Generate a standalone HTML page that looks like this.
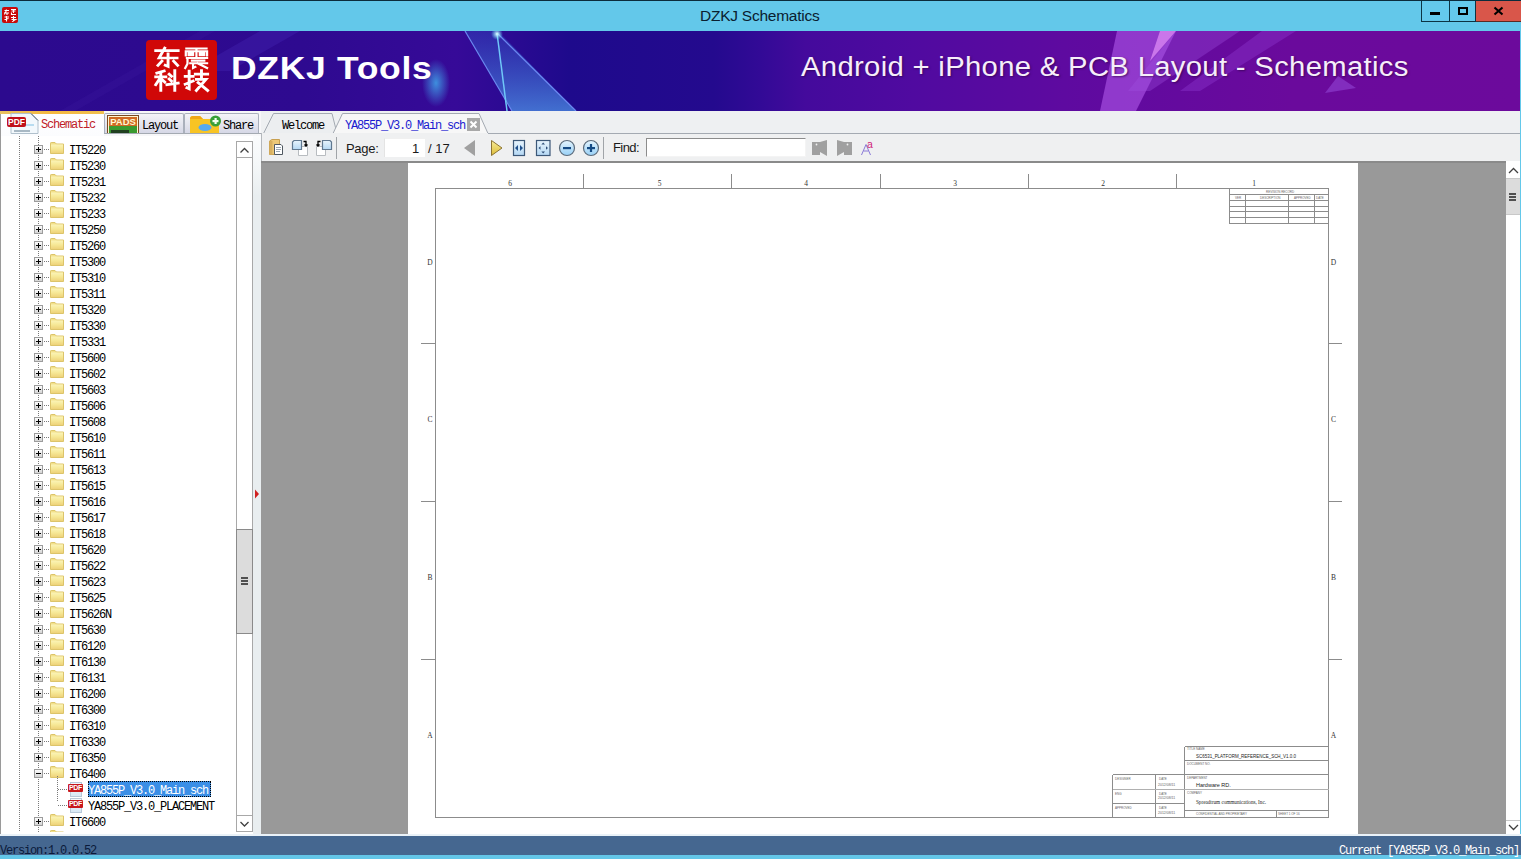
<!DOCTYPE html>
<html><head><meta charset="utf-8">
<style>
*{margin:0;padding:0;box-sizing:border-box}
html,body{width:1521px;height:859px;overflow:hidden;background:#63c8ea;font-family:"Liberation Sans",sans-serif}
.a{position:absolute}
.mono{font-family:"Liberation Mono",monospace;font-size:12px;letter-spacing:-1.2px;line-height:16px;white-space:pre;color:#000}
.dotv{width:1px;background:repeating-linear-gradient(180deg,#7a7a7a 0 1px,transparent 1px 2px)}
.doth{height:1px;background:repeating-linear-gradient(90deg,#7a7a7a 0 1px,transparent 1px 2px)}
.pbox{width:9px;height:9px;border:1px solid #9c9c9c;background:linear-gradient(180deg,#fdfdfd,#d4d4d4)}
.pbox i{position:absolute;background:#000}
.pbox i.h{left:1px;top:3px;width:5px;height:1px}
.pbox i.v{left:3px;top:1px;width:1px;height:5px}
.pdfi{width:16px;height:15px}
.pdfi .pg{position:absolute;left:2px;top:0;width:12px;height:15px;background:linear-gradient(180deg,#f4f8fc,#d8e8f4);border:1px solid #b8c8d8}
.pdfi .bd{position:absolute;left:0;top:2px;width:15px;height:8px;background:#c8181c;border-radius:1px;color:#fff;font:bold 7px/8px "Liberation Sans",sans-serif;letter-spacing:-0.3px;text-align:center}
.sel{background:#3a8ee6;border:1px dotted #000}
#title{left:0;top:0;width:1521px;height:31px;background:#63c8ea;border-top:1px solid #0b2c3c}
#banner{left:0;top:31px;width:1520px;height:80px;overflow:hidden;
 background:linear-gradient(90deg,#2c0a8c 0%,#2a0a8e 30%,#2a0a90 50%,#3a0a96 55%,#5a0aa0 66%,#6a0a9c 80%,#6c0a9a 100%)}
#tabrow{left:0;top:111px;width:1520px;height:25px;background:#f3f3f5}
#left{left:0;top:136px;width:253px;height:700px;background:#fff;border-left:1px solid #9a9a9a}
#splitter{left:253px;top:136px;width:8px;height:700px;background:linear-gradient(180deg,#fbfcfd 0,#f4f7f8 30px,#e9eef0 60px)}
#toolbar{left:261px;top:133px;width:1259px;height:29px;background:#eeeff0;border-top:1px solid #a8acb0;border-left:1px solid #d0d4d8}
#doc{left:261px;top:161px;width:1245px;height:673px;background:#999;border-top:2px solid #8a8a8a}
#vsr{left:1505px;top:162px;width:15px;height:672px;background:#fff}
#status{left:0;top:836px;width:1521px;height:19px;background:#456790}
#bottom{left:0;top:855px;width:1521px;height:4px;background:#63c6e8}
</style></head><body>
<svg width="0" height="0" style="position:absolute"><defs>
<linearGradient id="fg" x1="0" y1="0" x2="0" y2="1"><stop offset="0" stop-color="#fbf4b8"/><stop offset="0.5" stop-color="#f6e896"/><stop offset="1" stop-color="#eed27a"/></linearGradient>
</defs></svg>
<div id="title" class="a">
  <div class="a" style="left:700px;top:6px;font-size:15.5px;letter-spacing:-0.25px;color:#0a2030;line-height:17px">DZKJ Schematics</div>
</div>
<div id="banner" class="a">
 <svg class="a" style="left:0;top:0" width="1520" height="80" viewBox="0 0 1520 80">
  <defs>
   <linearGradient id="bg1" x1="0" y1="0" x2="1" y2="0">
    <stop offset="0" stop-color="#2c0a8e"/>
    <stop offset="0.2" stop-color="#2e0a90"/>
    <stop offset="0.3" stop-color="#360a98"/>
    <stop offset="0.375" stop-color="#1e0a8c"/>
    <stop offset="0.47" stop-color="#240a8e"/>
    <stop offset="0.5" stop-color="#320a96"/>
    <stop offset="0.53" stop-color="#440a9c"/>
    <stop offset="0.6" stop-color="#500aa0"/>
    <stop offset="0.7" stop-color="#5e0aa0"/>
    <stop offset="0.85" stop-color="#6a0a9c"/>
    <stop offset="1" stop-color="#6c0a9c"/>
   </linearGradient>
   <radialGradient id="glow" cx="0.5" cy="0.5" r="0.5"><stop offset="0" stop-color="#40b0f0" stop-opacity="0.8"/><stop offset="1" stop-color="#40b0f0" stop-opacity="0"/></radialGradient>
   <radialGradient id="glow2" cx="0.5" cy="0.5" r="0.5"><stop offset="0" stop-color="#e0ffff" stop-opacity="1"/><stop offset="1" stop-color="#60e0ff" stop-opacity="0"/></radialGradient>
   <linearGradient id="bm" x1="0" y1="0" x2="0" y2="1"><stop offset="0" stop-color="#3048c0" stop-opacity="0.45"/><stop offset="1" stop-color="#4a88e0" stop-opacity="0.8"/></linearGradient>
  </defs>
  <rect width="1520" height="80" fill="url(#bg1)"/>
  <!-- faint streaks left -->
  <path d="M60 80 L200 0 H215 L75 80 Z" fill="#4a2ab0" opacity="0.15"/>
  <path d="M190 40 L260 0 H300 L230 40 Z" fill="#5a3ad0" opacity="0.2"/>
  <!-- glow blob -->
  <ellipse cx="436" cy="52" rx="14" ry="24" fill="url(#glow)"/>
  <!-- beam -->
  <path d="M465 0 H498 L576 80 H512 Z" fill="url(#bm)"/>
  <path d="M465 0 L512 80" stroke="#6a8af0" stroke-width="1.2"/>
  <path d="M497 2 L507 80" stroke="#70c8f8" stroke-width="1.5"/>
  <path d="M497 2 L576 80" stroke="#6a88f0" stroke-width="1.3"/>
  <circle cx="497" cy="3" r="6" fill="url(#glow2)"/>
  <!-- right pink streaks -->
  <path d="M1117 0 H1176 L1136 80 H1100 Z" fill="#b860f0" opacity="0.55"/>
  <path d="M1160 0 H1176 L1150 30 Z" fill="#f0a0ff" opacity="0.6"/>
  <path d="M1176 0 H1240 L1150 60 H1128 Z" fill="#a050e0" opacity="0.35"/>
  <path d="M1262 0 H1296 L1200 60 H1180 Z" fill="#9a48e0" opacity="0.3"/>
  <path d="M1325 62 L1356 57 L1338 45 Z" fill="#9a50e0" opacity="0.5"/>
 </svg>
 <div class="a" style="left:146px;top:9px;width:71px;height:60px;background:#d00808;border-radius:4px"></div>
 <svg class="a" style="left:146px;top:9px" width="71" height="60" viewBox="0 0 71 60">
  <g stroke="#fff" stroke-width="2.6" fill="none" stroke-linecap="square">
   <g transform="translate(7.5,7.5) scale(1.12,1.05)">
    <path d="M2 3 H22 M10 0.5 L5 10 H21 M13 6 V18 L10.5 17 M7.5 13 L4 17 M18 13 L21.5 17"/>
   </g>
   <g transform="translate(37,7.5) scale(1.12,1.05)" stroke-width="2">
    <path d="M3 1 H21 M2.5 7.5 V3.5 H21.5 V7.5 M12 1 V8.5 M5 5.2 H9 M15 5.2 H19 M5 7.3 H9 M15 7.3 H19 M3.5 10 H21.5 M4 10 V15.5 L2 19.5 M8 12.5 H19 M6.5 15 H21.5 M9 15 V19.5 L11 18.5 M13 15 L21.5 19.5"/>
   </g>
   <g transform="translate(7.5,30) scale(1.12,1.05)">
    <path d="M9.5 1 L3 3 M2 6.5 H11 M6.5 3 V19.5 M6 7.5 L2 14 M7.5 9 L10 11.5 M14 4 L16 6 M14 8.5 L16 10.5 M12 14 L22 12.5 M19 0.5 V19.5"/>
   </g>
   <g transform="translate(37,30) scale(1.12,1.05)">
    <path d="M2 6 H9 M5.5 1 V18 L3.5 17 M2 13.5 L9 10.5 M11 4 H22 M16.5 0.5 V9 M12 9 H20.5 L12 19.5 M13.5 12 L22 19.5"/>
   </g>
  </g>
 </svg>
 <div class="a" style="left:231px;top:20px;font-weight:bold;font-size:31px;letter-spacing:0.6px;color:#fff;line-height:35px;transform-origin:0 0;transform:scaleX(1.145)">DZKJ Tools</div>
 <div class="a" style="left:801px;top:21px;font-size:27px;letter-spacing:0.3px;transform-origin:0 0;transform:scaleX(1.083);color:#f6eefa;line-height:30px;text-shadow:1px 1px 2px rgba(40,0,60,.6)">Android + iPhone &amp; PCB Layout - Schematics</div>
</div>
</div>

<!-- tab row -->
<div class="a" style="left:0;top:111px;width:261px;height:25px;background:#f7f7f9"></div>
<div class="a" style="left:261px;top:111px;width:1259px;height:22px;background:#eef0f2"></div>
<!-- Schematic active tab -->
<div class="a" style="left:0;top:111px;width:104px;height:26px;background:linear-gradient(180deg,#ffffff,#fbfcfe);border-left:1px solid #9a9a9a"></div>
<div class="a" style="left:0;top:111px;width:104px;height:3px;background:linear-gradient(90deg,#e8c060,#f4b840 50%,#f0c050)"></div>
<svg class="a" style="left:6px;top:112px" width="34" height="23" viewBox="0 0 34 23">
 <path d="M5 1.5 H25 L32 8.5 V21.5 H5 Z" fill="#f2f8fc" stroke="#b0c0cc" stroke-width="1"/>
 <path d="M25 1.5 L32 8.5" stroke="#506070" stroke-width="1"/>
 <rect x="10" y="12" width="18" height="2" fill="#b8dcf0"/>
 <rect x="8" y="18" width="16" height="2" fill="#a8b8c4"/>
 <rect x="1" y="5" width="19" height="10" rx="2" fill="#c0101a"/>
 <text x="10.5" y="13" font-family="Liberation Sans" font-weight="bold" font-size="8.5" fill="#fff" text-anchor="middle">PDF</text>
</svg>
<div class="a mono" style="left:41px;top:117px;color:#c02028">Schematic</div>
<!-- Layout tab -->
<div class="a" style="left:104px;top:113px;width:80px;height:20px;background:linear-gradient(180deg,#f4f4f8,#d6d8e6);border:1px solid #aab0bc;border-bottom:none;border-radius:2px 2px 0 0"></div>
<svg class="a" style="left:107px;top:115px" width="32" height="19" viewBox="0 0 32 19">
 <rect x="0.5" y="0.5" width="31" height="18" fill="#fff6d0" stroke="#7a4a20"/>
 <rect x="2" y="2" width="28" height="16" fill="#d06a24"/>
 <rect x="2" y="11" width="28" height="7" fill="#3a9a30"/>
 <rect x="4" y="15" width="18" height="3" fill="#204020"/>
 <text x="16" y="10" font-family="Liberation Sans" font-weight="bold" font-size="9.5" fill="#fff6d0" text-anchor="middle">PADS</text>
</svg>
<div class="a mono" style="left:142px;top:118px">Layout</div>
<div class="a" style="left:104px;top:133px;width:157px;height:1px;background:#a4aab2"></div>
<!-- Share tab -->
<div class="a" style="left:184px;top:113px;width:75px;height:20px;background:linear-gradient(180deg,#f4f4f8,#d6d8e6);border:1px solid #aab0bc;border-bottom:none;border-radius:2px 2px 0 0"></div>
<svg class="a" style="left:189px;top:115px" width="33" height="19" viewBox="0 0 33 19">
 <path d="M1 4 Q1 1 4 1 H11 L14 4 H30 V18 H1 Z" fill="#f8c424"/>
 <path d="M1 4 Q1 1 4 1 H11 L14 4 Z" fill="#f0a818"/>
 <ellipse cx="16" cy="12.5" rx="6.5" ry="3.5" fill="#58aaf0"/>
 <circle cx="26.5" cy="6" r="5.5" fill="#38a038"/>
 <rect x="25.5" y="3" width="2.2" height="6" fill="#f4fff0"/>
 <rect x="23.5" y="5" width="6" height="2.2" fill="#f4fff0"/>
</svg>
<div class="a mono" style="left:223px;top:118px">Share</div>
<!-- doc tabs -->
<svg class="a" style="left:261px;top:111px" width="1259" height="25" viewBox="0 0 1259 25">
 <path d="M2.5 22.5 L12.5 2.5 H71 L76 22.5" fill="#eceef0" stroke="#a4aab2" stroke-width="1"/>
 <path d="M72 22.5 L81.5 2.5 H218 L227 22.5" fill="#f7f7f7" stroke="#a4aab2" stroke-width="1"/>
 <path d="M0 22.5 H72 M227 22.5 H1259" stroke="#a4aab2" stroke-width="1"/>
</svg>
<div class="a mono" style="left:282px;top:118px">Welcome</div>
<div class="a mono" style="left:345px;top:118px;color:#1a1ad0">YA855P_V3.0_Main_sch</div>
<div class="a" style="left:467px;top:118px;width:13px;height:13px;background:#a8a8a8"></div>
<svg class="a" style="left:467px;top:118px" width="13" height="13"><path d="M3.5 3.5 L9.5 9.5 M9.5 3.5 L3.5 9.5" stroke="#fff" stroke-width="2"/></svg>

<div id="left" class="a"></div>
<div class="a" style="left:0;top:136px;width:236px;height:696px;overflow:hidden">
<div class="a" style="left:0;top:-136px;width:236px;height:900px">
<div class="a dotv" style="left:19px;top:136px;height:700px"></div>
<div class="a pbox" style="left:34px;top:145px"><i class="h"></i><i class="v"></i></div>
<div class="a doth" style="left:44px;top:149px;width:6px"></div>
<svg class="a" style="left:50px;top:142px" width="14" height="12" viewBox="0 0 14 12"><path d="M0.5 2 V1.2 Q0.5 0.5 1.2 0.5 H5 L6.5 2 H13.5 V11.5 H0.5 Z" fill="#f2e08a" stroke="#dcc46a" stroke-width="1"/><rect x="1" y="2.5" width="12" height="8.5" fill="url(#fg)"/></svg>
<div class="a mono" style="left:69px;top:143px">IT5220</div>
<div class="a pbox" style="left:34px;top:161px"><i class="h"></i><i class="v"></i></div>
<div class="a doth" style="left:44px;top:165px;width:6px"></div>
<svg class="a" style="left:50px;top:158px" width="14" height="12" viewBox="0 0 14 12"><path d="M0.5 2 V1.2 Q0.5 0.5 1.2 0.5 H5 L6.5 2 H13.5 V11.5 H0.5 Z" fill="#f2e08a" stroke="#dcc46a" stroke-width="1"/><rect x="1" y="2.5" width="12" height="8.5" fill="url(#fg)"/></svg>
<div class="a mono" style="left:69px;top:159px">IT5230</div>
<div class="a pbox" style="left:34px;top:177px"><i class="h"></i><i class="v"></i></div>
<div class="a doth" style="left:44px;top:181px;width:6px"></div>
<svg class="a" style="left:50px;top:174px" width="14" height="12" viewBox="0 0 14 12"><path d="M0.5 2 V1.2 Q0.5 0.5 1.2 0.5 H5 L6.5 2 H13.5 V11.5 H0.5 Z" fill="#f2e08a" stroke="#dcc46a" stroke-width="1"/><rect x="1" y="2.5" width="12" height="8.5" fill="url(#fg)"/></svg>
<div class="a mono" style="left:69px;top:175px">IT5231</div>
<div class="a pbox" style="left:34px;top:193px"><i class="h"></i><i class="v"></i></div>
<div class="a doth" style="left:44px;top:197px;width:6px"></div>
<svg class="a" style="left:50px;top:190px" width="14" height="12" viewBox="0 0 14 12"><path d="M0.5 2 V1.2 Q0.5 0.5 1.2 0.5 H5 L6.5 2 H13.5 V11.5 H0.5 Z" fill="#f2e08a" stroke="#dcc46a" stroke-width="1"/><rect x="1" y="2.5" width="12" height="8.5" fill="url(#fg)"/></svg>
<div class="a mono" style="left:69px;top:191px">IT5232</div>
<div class="a pbox" style="left:34px;top:209px"><i class="h"></i><i class="v"></i></div>
<div class="a doth" style="left:44px;top:213px;width:6px"></div>
<svg class="a" style="left:50px;top:206px" width="14" height="12" viewBox="0 0 14 12"><path d="M0.5 2 V1.2 Q0.5 0.5 1.2 0.5 H5 L6.5 2 H13.5 V11.5 H0.5 Z" fill="#f2e08a" stroke="#dcc46a" stroke-width="1"/><rect x="1" y="2.5" width="12" height="8.5" fill="url(#fg)"/></svg>
<div class="a mono" style="left:69px;top:207px">IT5233</div>
<div class="a pbox" style="left:34px;top:225px"><i class="h"></i><i class="v"></i></div>
<div class="a doth" style="left:44px;top:229px;width:6px"></div>
<svg class="a" style="left:50px;top:222px" width="14" height="12" viewBox="0 0 14 12"><path d="M0.5 2 V1.2 Q0.5 0.5 1.2 0.5 H5 L6.5 2 H13.5 V11.5 H0.5 Z" fill="#f2e08a" stroke="#dcc46a" stroke-width="1"/><rect x="1" y="2.5" width="12" height="8.5" fill="url(#fg)"/></svg>
<div class="a mono" style="left:69px;top:223px">IT5250</div>
<div class="a pbox" style="left:34px;top:241px"><i class="h"></i><i class="v"></i></div>
<div class="a doth" style="left:44px;top:245px;width:6px"></div>
<svg class="a" style="left:50px;top:238px" width="14" height="12" viewBox="0 0 14 12"><path d="M0.5 2 V1.2 Q0.5 0.5 1.2 0.5 H5 L6.5 2 H13.5 V11.5 H0.5 Z" fill="#f2e08a" stroke="#dcc46a" stroke-width="1"/><rect x="1" y="2.5" width="12" height="8.5" fill="url(#fg)"/></svg>
<div class="a mono" style="left:69px;top:239px">IT5260</div>
<div class="a pbox" style="left:34px;top:257px"><i class="h"></i><i class="v"></i></div>
<div class="a doth" style="left:44px;top:261px;width:6px"></div>
<svg class="a" style="left:50px;top:254px" width="14" height="12" viewBox="0 0 14 12"><path d="M0.5 2 V1.2 Q0.5 0.5 1.2 0.5 H5 L6.5 2 H13.5 V11.5 H0.5 Z" fill="#f2e08a" stroke="#dcc46a" stroke-width="1"/><rect x="1" y="2.5" width="12" height="8.5" fill="url(#fg)"/></svg>
<div class="a mono" style="left:69px;top:255px">IT5300</div>
<div class="a pbox" style="left:34px;top:273px"><i class="h"></i><i class="v"></i></div>
<div class="a doth" style="left:44px;top:277px;width:6px"></div>
<svg class="a" style="left:50px;top:270px" width="14" height="12" viewBox="0 0 14 12"><path d="M0.5 2 V1.2 Q0.5 0.5 1.2 0.5 H5 L6.5 2 H13.5 V11.5 H0.5 Z" fill="#f2e08a" stroke="#dcc46a" stroke-width="1"/><rect x="1" y="2.5" width="12" height="8.5" fill="url(#fg)"/></svg>
<div class="a mono" style="left:69px;top:271px">IT5310</div>
<div class="a pbox" style="left:34px;top:289px"><i class="h"></i><i class="v"></i></div>
<div class="a doth" style="left:44px;top:293px;width:6px"></div>
<svg class="a" style="left:50px;top:286px" width="14" height="12" viewBox="0 0 14 12"><path d="M0.5 2 V1.2 Q0.5 0.5 1.2 0.5 H5 L6.5 2 H13.5 V11.5 H0.5 Z" fill="#f2e08a" stroke="#dcc46a" stroke-width="1"/><rect x="1" y="2.5" width="12" height="8.5" fill="url(#fg)"/></svg>
<div class="a mono" style="left:69px;top:287px">IT5311</div>
<div class="a pbox" style="left:34px;top:305px"><i class="h"></i><i class="v"></i></div>
<div class="a doth" style="left:44px;top:309px;width:6px"></div>
<svg class="a" style="left:50px;top:302px" width="14" height="12" viewBox="0 0 14 12"><path d="M0.5 2 V1.2 Q0.5 0.5 1.2 0.5 H5 L6.5 2 H13.5 V11.5 H0.5 Z" fill="#f2e08a" stroke="#dcc46a" stroke-width="1"/><rect x="1" y="2.5" width="12" height="8.5" fill="url(#fg)"/></svg>
<div class="a mono" style="left:69px;top:303px">IT5320</div>
<div class="a pbox" style="left:34px;top:321px"><i class="h"></i><i class="v"></i></div>
<div class="a doth" style="left:44px;top:325px;width:6px"></div>
<svg class="a" style="left:50px;top:318px" width="14" height="12" viewBox="0 0 14 12"><path d="M0.5 2 V1.2 Q0.5 0.5 1.2 0.5 H5 L6.5 2 H13.5 V11.5 H0.5 Z" fill="#f2e08a" stroke="#dcc46a" stroke-width="1"/><rect x="1" y="2.5" width="12" height="8.5" fill="url(#fg)"/></svg>
<div class="a mono" style="left:69px;top:319px">IT5330</div>
<div class="a pbox" style="left:34px;top:337px"><i class="h"></i><i class="v"></i></div>
<div class="a doth" style="left:44px;top:341px;width:6px"></div>
<svg class="a" style="left:50px;top:334px" width="14" height="12" viewBox="0 0 14 12"><path d="M0.5 2 V1.2 Q0.5 0.5 1.2 0.5 H5 L6.5 2 H13.5 V11.5 H0.5 Z" fill="#f2e08a" stroke="#dcc46a" stroke-width="1"/><rect x="1" y="2.5" width="12" height="8.5" fill="url(#fg)"/></svg>
<div class="a mono" style="left:69px;top:335px">IT5331</div>
<div class="a pbox" style="left:34px;top:353px"><i class="h"></i><i class="v"></i></div>
<div class="a doth" style="left:44px;top:357px;width:6px"></div>
<svg class="a" style="left:50px;top:350px" width="14" height="12" viewBox="0 0 14 12"><path d="M0.5 2 V1.2 Q0.5 0.5 1.2 0.5 H5 L6.5 2 H13.5 V11.5 H0.5 Z" fill="#f2e08a" stroke="#dcc46a" stroke-width="1"/><rect x="1" y="2.5" width="12" height="8.5" fill="url(#fg)"/></svg>
<div class="a mono" style="left:69px;top:351px">IT5600</div>
<div class="a pbox" style="left:34px;top:369px"><i class="h"></i><i class="v"></i></div>
<div class="a doth" style="left:44px;top:373px;width:6px"></div>
<svg class="a" style="left:50px;top:366px" width="14" height="12" viewBox="0 0 14 12"><path d="M0.5 2 V1.2 Q0.5 0.5 1.2 0.5 H5 L6.5 2 H13.5 V11.5 H0.5 Z" fill="#f2e08a" stroke="#dcc46a" stroke-width="1"/><rect x="1" y="2.5" width="12" height="8.5" fill="url(#fg)"/></svg>
<div class="a mono" style="left:69px;top:367px">IT5602</div>
<div class="a pbox" style="left:34px;top:385px"><i class="h"></i><i class="v"></i></div>
<div class="a doth" style="left:44px;top:389px;width:6px"></div>
<svg class="a" style="left:50px;top:382px" width="14" height="12" viewBox="0 0 14 12"><path d="M0.5 2 V1.2 Q0.5 0.5 1.2 0.5 H5 L6.5 2 H13.5 V11.5 H0.5 Z" fill="#f2e08a" stroke="#dcc46a" stroke-width="1"/><rect x="1" y="2.5" width="12" height="8.5" fill="url(#fg)"/></svg>
<div class="a mono" style="left:69px;top:383px">IT5603</div>
<div class="a pbox" style="left:34px;top:401px"><i class="h"></i><i class="v"></i></div>
<div class="a doth" style="left:44px;top:405px;width:6px"></div>
<svg class="a" style="left:50px;top:398px" width="14" height="12" viewBox="0 0 14 12"><path d="M0.5 2 V1.2 Q0.5 0.5 1.2 0.5 H5 L6.5 2 H13.5 V11.5 H0.5 Z" fill="#f2e08a" stroke="#dcc46a" stroke-width="1"/><rect x="1" y="2.5" width="12" height="8.5" fill="url(#fg)"/></svg>
<div class="a mono" style="left:69px;top:399px">IT5606</div>
<div class="a pbox" style="left:34px;top:417px"><i class="h"></i><i class="v"></i></div>
<div class="a doth" style="left:44px;top:421px;width:6px"></div>
<svg class="a" style="left:50px;top:414px" width="14" height="12" viewBox="0 0 14 12"><path d="M0.5 2 V1.2 Q0.5 0.5 1.2 0.5 H5 L6.5 2 H13.5 V11.5 H0.5 Z" fill="#f2e08a" stroke="#dcc46a" stroke-width="1"/><rect x="1" y="2.5" width="12" height="8.5" fill="url(#fg)"/></svg>
<div class="a mono" style="left:69px;top:415px">IT5608</div>
<div class="a pbox" style="left:34px;top:433px"><i class="h"></i><i class="v"></i></div>
<div class="a doth" style="left:44px;top:437px;width:6px"></div>
<svg class="a" style="left:50px;top:430px" width="14" height="12" viewBox="0 0 14 12"><path d="M0.5 2 V1.2 Q0.5 0.5 1.2 0.5 H5 L6.5 2 H13.5 V11.5 H0.5 Z" fill="#f2e08a" stroke="#dcc46a" stroke-width="1"/><rect x="1" y="2.5" width="12" height="8.5" fill="url(#fg)"/></svg>
<div class="a mono" style="left:69px;top:431px">IT5610</div>
<div class="a pbox" style="left:34px;top:449px"><i class="h"></i><i class="v"></i></div>
<div class="a doth" style="left:44px;top:453px;width:6px"></div>
<svg class="a" style="left:50px;top:446px" width="14" height="12" viewBox="0 0 14 12"><path d="M0.5 2 V1.2 Q0.5 0.5 1.2 0.5 H5 L6.5 2 H13.5 V11.5 H0.5 Z" fill="#f2e08a" stroke="#dcc46a" stroke-width="1"/><rect x="1" y="2.5" width="12" height="8.5" fill="url(#fg)"/></svg>
<div class="a mono" style="left:69px;top:447px">IT5611</div>
<div class="a pbox" style="left:34px;top:465px"><i class="h"></i><i class="v"></i></div>
<div class="a doth" style="left:44px;top:469px;width:6px"></div>
<svg class="a" style="left:50px;top:462px" width="14" height="12" viewBox="0 0 14 12"><path d="M0.5 2 V1.2 Q0.5 0.5 1.2 0.5 H5 L6.5 2 H13.5 V11.5 H0.5 Z" fill="#f2e08a" stroke="#dcc46a" stroke-width="1"/><rect x="1" y="2.5" width="12" height="8.5" fill="url(#fg)"/></svg>
<div class="a mono" style="left:69px;top:463px">IT5613</div>
<div class="a pbox" style="left:34px;top:481px"><i class="h"></i><i class="v"></i></div>
<div class="a doth" style="left:44px;top:485px;width:6px"></div>
<svg class="a" style="left:50px;top:478px" width="14" height="12" viewBox="0 0 14 12"><path d="M0.5 2 V1.2 Q0.5 0.5 1.2 0.5 H5 L6.5 2 H13.5 V11.5 H0.5 Z" fill="#f2e08a" stroke="#dcc46a" stroke-width="1"/><rect x="1" y="2.5" width="12" height="8.5" fill="url(#fg)"/></svg>
<div class="a mono" style="left:69px;top:479px">IT5615</div>
<div class="a pbox" style="left:34px;top:497px"><i class="h"></i><i class="v"></i></div>
<div class="a doth" style="left:44px;top:501px;width:6px"></div>
<svg class="a" style="left:50px;top:494px" width="14" height="12" viewBox="0 0 14 12"><path d="M0.5 2 V1.2 Q0.5 0.5 1.2 0.5 H5 L6.5 2 H13.5 V11.5 H0.5 Z" fill="#f2e08a" stroke="#dcc46a" stroke-width="1"/><rect x="1" y="2.5" width="12" height="8.5" fill="url(#fg)"/></svg>
<div class="a mono" style="left:69px;top:495px">IT5616</div>
<div class="a pbox" style="left:34px;top:513px"><i class="h"></i><i class="v"></i></div>
<div class="a doth" style="left:44px;top:517px;width:6px"></div>
<svg class="a" style="left:50px;top:510px" width="14" height="12" viewBox="0 0 14 12"><path d="M0.5 2 V1.2 Q0.5 0.5 1.2 0.5 H5 L6.5 2 H13.5 V11.5 H0.5 Z" fill="#f2e08a" stroke="#dcc46a" stroke-width="1"/><rect x="1" y="2.5" width="12" height="8.5" fill="url(#fg)"/></svg>
<div class="a mono" style="left:69px;top:511px">IT5617</div>
<div class="a pbox" style="left:34px;top:529px"><i class="h"></i><i class="v"></i></div>
<div class="a doth" style="left:44px;top:533px;width:6px"></div>
<svg class="a" style="left:50px;top:526px" width="14" height="12" viewBox="0 0 14 12"><path d="M0.5 2 V1.2 Q0.5 0.5 1.2 0.5 H5 L6.5 2 H13.5 V11.5 H0.5 Z" fill="#f2e08a" stroke="#dcc46a" stroke-width="1"/><rect x="1" y="2.5" width="12" height="8.5" fill="url(#fg)"/></svg>
<div class="a mono" style="left:69px;top:527px">IT5618</div>
<div class="a pbox" style="left:34px;top:545px"><i class="h"></i><i class="v"></i></div>
<div class="a doth" style="left:44px;top:549px;width:6px"></div>
<svg class="a" style="left:50px;top:542px" width="14" height="12" viewBox="0 0 14 12"><path d="M0.5 2 V1.2 Q0.5 0.5 1.2 0.5 H5 L6.5 2 H13.5 V11.5 H0.5 Z" fill="#f2e08a" stroke="#dcc46a" stroke-width="1"/><rect x="1" y="2.5" width="12" height="8.5" fill="url(#fg)"/></svg>
<div class="a mono" style="left:69px;top:543px">IT5620</div>
<div class="a pbox" style="left:34px;top:561px"><i class="h"></i><i class="v"></i></div>
<div class="a doth" style="left:44px;top:565px;width:6px"></div>
<svg class="a" style="left:50px;top:558px" width="14" height="12" viewBox="0 0 14 12"><path d="M0.5 2 V1.2 Q0.5 0.5 1.2 0.5 H5 L6.5 2 H13.5 V11.5 H0.5 Z" fill="#f2e08a" stroke="#dcc46a" stroke-width="1"/><rect x="1" y="2.5" width="12" height="8.5" fill="url(#fg)"/></svg>
<div class="a mono" style="left:69px;top:559px">IT5622</div>
<div class="a pbox" style="left:34px;top:577px"><i class="h"></i><i class="v"></i></div>
<div class="a doth" style="left:44px;top:581px;width:6px"></div>
<svg class="a" style="left:50px;top:574px" width="14" height="12" viewBox="0 0 14 12"><path d="M0.5 2 V1.2 Q0.5 0.5 1.2 0.5 H5 L6.5 2 H13.5 V11.5 H0.5 Z" fill="#f2e08a" stroke="#dcc46a" stroke-width="1"/><rect x="1" y="2.5" width="12" height="8.5" fill="url(#fg)"/></svg>
<div class="a mono" style="left:69px;top:575px">IT5623</div>
<div class="a pbox" style="left:34px;top:593px"><i class="h"></i><i class="v"></i></div>
<div class="a doth" style="left:44px;top:597px;width:6px"></div>
<svg class="a" style="left:50px;top:590px" width="14" height="12" viewBox="0 0 14 12"><path d="M0.5 2 V1.2 Q0.5 0.5 1.2 0.5 H5 L6.5 2 H13.5 V11.5 H0.5 Z" fill="#f2e08a" stroke="#dcc46a" stroke-width="1"/><rect x="1" y="2.5" width="12" height="8.5" fill="url(#fg)"/></svg>
<div class="a mono" style="left:69px;top:591px">IT5625</div>
<div class="a pbox" style="left:34px;top:609px"><i class="h"></i><i class="v"></i></div>
<div class="a doth" style="left:44px;top:613px;width:6px"></div>
<svg class="a" style="left:50px;top:606px" width="14" height="12" viewBox="0 0 14 12"><path d="M0.5 2 V1.2 Q0.5 0.5 1.2 0.5 H5 L6.5 2 H13.5 V11.5 H0.5 Z" fill="#f2e08a" stroke="#dcc46a" stroke-width="1"/><rect x="1" y="2.5" width="12" height="8.5" fill="url(#fg)"/></svg>
<div class="a mono" style="left:69px;top:607px">IT5626N</div>
<div class="a pbox" style="left:34px;top:625px"><i class="h"></i><i class="v"></i></div>
<div class="a doth" style="left:44px;top:629px;width:6px"></div>
<svg class="a" style="left:50px;top:622px" width="14" height="12" viewBox="0 0 14 12"><path d="M0.5 2 V1.2 Q0.5 0.5 1.2 0.5 H5 L6.5 2 H13.5 V11.5 H0.5 Z" fill="#f2e08a" stroke="#dcc46a" stroke-width="1"/><rect x="1" y="2.5" width="12" height="8.5" fill="url(#fg)"/></svg>
<div class="a mono" style="left:69px;top:623px">IT5630</div>
<div class="a pbox" style="left:34px;top:641px"><i class="h"></i><i class="v"></i></div>
<div class="a doth" style="left:44px;top:645px;width:6px"></div>
<svg class="a" style="left:50px;top:638px" width="14" height="12" viewBox="0 0 14 12"><path d="M0.5 2 V1.2 Q0.5 0.5 1.2 0.5 H5 L6.5 2 H13.5 V11.5 H0.5 Z" fill="#f2e08a" stroke="#dcc46a" stroke-width="1"/><rect x="1" y="2.5" width="12" height="8.5" fill="url(#fg)"/></svg>
<div class="a mono" style="left:69px;top:639px">IT6120</div>
<div class="a pbox" style="left:34px;top:657px"><i class="h"></i><i class="v"></i></div>
<div class="a doth" style="left:44px;top:661px;width:6px"></div>
<svg class="a" style="left:50px;top:654px" width="14" height="12" viewBox="0 0 14 12"><path d="M0.5 2 V1.2 Q0.5 0.5 1.2 0.5 H5 L6.5 2 H13.5 V11.5 H0.5 Z" fill="#f2e08a" stroke="#dcc46a" stroke-width="1"/><rect x="1" y="2.5" width="12" height="8.5" fill="url(#fg)"/></svg>
<div class="a mono" style="left:69px;top:655px">IT6130</div>
<div class="a pbox" style="left:34px;top:673px"><i class="h"></i><i class="v"></i></div>
<div class="a doth" style="left:44px;top:677px;width:6px"></div>
<svg class="a" style="left:50px;top:670px" width="14" height="12" viewBox="0 0 14 12"><path d="M0.5 2 V1.2 Q0.5 0.5 1.2 0.5 H5 L6.5 2 H13.5 V11.5 H0.5 Z" fill="#f2e08a" stroke="#dcc46a" stroke-width="1"/><rect x="1" y="2.5" width="12" height="8.5" fill="url(#fg)"/></svg>
<div class="a mono" style="left:69px;top:671px">IT6131</div>
<div class="a pbox" style="left:34px;top:689px"><i class="h"></i><i class="v"></i></div>
<div class="a doth" style="left:44px;top:693px;width:6px"></div>
<svg class="a" style="left:50px;top:686px" width="14" height="12" viewBox="0 0 14 12"><path d="M0.5 2 V1.2 Q0.5 0.5 1.2 0.5 H5 L6.5 2 H13.5 V11.5 H0.5 Z" fill="#f2e08a" stroke="#dcc46a" stroke-width="1"/><rect x="1" y="2.5" width="12" height="8.5" fill="url(#fg)"/></svg>
<div class="a mono" style="left:69px;top:687px">IT6200</div>
<div class="a pbox" style="left:34px;top:705px"><i class="h"></i><i class="v"></i></div>
<div class="a doth" style="left:44px;top:709px;width:6px"></div>
<svg class="a" style="left:50px;top:702px" width="14" height="12" viewBox="0 0 14 12"><path d="M0.5 2 V1.2 Q0.5 0.5 1.2 0.5 H5 L6.5 2 H13.5 V11.5 H0.5 Z" fill="#f2e08a" stroke="#dcc46a" stroke-width="1"/><rect x="1" y="2.5" width="12" height="8.5" fill="url(#fg)"/></svg>
<div class="a mono" style="left:69px;top:703px">IT6300</div>
<div class="a pbox" style="left:34px;top:721px"><i class="h"></i><i class="v"></i></div>
<div class="a doth" style="left:44px;top:725px;width:6px"></div>
<svg class="a" style="left:50px;top:718px" width="14" height="12" viewBox="0 0 14 12"><path d="M0.5 2 V1.2 Q0.5 0.5 1.2 0.5 H5 L6.5 2 H13.5 V11.5 H0.5 Z" fill="#f2e08a" stroke="#dcc46a" stroke-width="1"/><rect x="1" y="2.5" width="12" height="8.5" fill="url(#fg)"/></svg>
<div class="a mono" style="left:69px;top:719px">IT6310</div>
<div class="a pbox" style="left:34px;top:737px"><i class="h"></i><i class="v"></i></div>
<div class="a doth" style="left:44px;top:741px;width:6px"></div>
<svg class="a" style="left:50px;top:734px" width="14" height="12" viewBox="0 0 14 12"><path d="M0.5 2 V1.2 Q0.5 0.5 1.2 0.5 H5 L6.5 2 H13.5 V11.5 H0.5 Z" fill="#f2e08a" stroke="#dcc46a" stroke-width="1"/><rect x="1" y="2.5" width="12" height="8.5" fill="url(#fg)"/></svg>
<div class="a mono" style="left:69px;top:735px">IT6330</div>
<div class="a pbox" style="left:34px;top:753px"><i class="h"></i><i class="v"></i></div>
<div class="a doth" style="left:44px;top:757px;width:6px"></div>
<svg class="a" style="left:50px;top:750px" width="14" height="12" viewBox="0 0 14 12"><path d="M0.5 2 V1.2 Q0.5 0.5 1.2 0.5 H5 L6.5 2 H13.5 V11.5 H0.5 Z" fill="#f2e08a" stroke="#dcc46a" stroke-width="1"/><rect x="1" y="2.5" width="12" height="8.5" fill="url(#fg)"/></svg>
<div class="a mono" style="left:69px;top:751px">IT6350</div>
<div class="a pbox" style="left:34px;top:769px"><i class="h"></i></div>
<div class="a doth" style="left:44px;top:773px;width:6px"></div>
<svg class="a" style="left:50px;top:766px" width="14" height="12" viewBox="0 0 14 12"><path d="M0.5 2 V1.2 Q0.5 0.5 1.2 0.5 H5 L6.5 2 H13.5 V11.5 H0.5 Z" fill="#f2e08a" stroke="#dcc46a" stroke-width="1"/><rect x="1" y="2.5" width="12" height="8.5" fill="url(#fg)"/></svg>
<div class="a mono" style="left:69px;top:767px">IT6400</div>
<div class="a dotv" style="left:57px;top:776px;height:26px"></div>
<div class="a doth" style="left:58px;top:789px;width:10px"></div>
<div class="a pdfi" style="left:68px;top:782px"><div class="pg"></div><div class="bd">PDF</div></div>
<div class="a sel" style="left:88px;top:781px;width:123px;height:16px"></div>
<div class="a mono" style="left:88px;top:783px;color:#fff">YA855P_V3.0_Main_sch</div>
<div class="a doth" style="left:58px;top:805px;width:10px"></div>
<div class="a pdfi" style="left:68px;top:798px"><div class="pg"></div><div class="bd">PDF</div></div>
<div class="a mono" style="left:88px;top:799px;color:#000">YA855P_V3.0_PLACEMENT</div>
<div class="a pbox" style="left:34px;top:817px"><i class="h"></i><i class="v"></i></div>
<div class="a doth" style="left:44px;top:821px;width:6px"></div>
<svg class="a" style="left:50px;top:814px" width="14" height="12" viewBox="0 0 14 12"><path d="M0.5 2 V1.2 Q0.5 0.5 1.2 0.5 H5 L6.5 2 H13.5 V11.5 H0.5 Z" fill="#f2e08a" stroke="#dcc46a" stroke-width="1"/><rect x="1" y="2.5" width="12" height="8.5" fill="url(#fg)"/></svg>
<div class="a mono" style="left:69px;top:815px">IT6600</div>
<div class="a pbox" style="left:34px;top:833px"><i class="h"></i><i class="v"></i></div>
<div class="a doth" style="left:44px;top:837px;width:6px"></div>
<svg class="a" style="left:50px;top:830px" width="14" height="12" viewBox="0 0 14 12"><path d="M0.5 2 V1.2 Q0.5 0.5 1.2 0.5 H5 L6.5 2 H13.5 V11.5 H0.5 Z" fill="#f2e08a" stroke="#dcc46a" stroke-width="1"/><rect x="1" y="2.5" width="12" height="8.5" fill="url(#fg)"/></svg>
<div class="a mono" style="left:69px;top:831px">IT6610</div>
<div class="a dotv" style="left:38px;top:155px;height:6px"></div>
<div class="a dotv" style="left:38px;top:171px;height:6px"></div>
<div class="a dotv" style="left:38px;top:187px;height:6px"></div>
<div class="a dotv" style="left:38px;top:203px;height:6px"></div>
<div class="a dotv" style="left:38px;top:219px;height:6px"></div>
<div class="a dotv" style="left:38px;top:235px;height:6px"></div>
<div class="a dotv" style="left:38px;top:251px;height:6px"></div>
<div class="a dotv" style="left:38px;top:267px;height:6px"></div>
<div class="a dotv" style="left:38px;top:283px;height:6px"></div>
<div class="a dotv" style="left:38px;top:299px;height:6px"></div>
<div class="a dotv" style="left:38px;top:315px;height:6px"></div>
<div class="a dotv" style="left:38px;top:331px;height:6px"></div>
<div class="a dotv" style="left:38px;top:347px;height:6px"></div>
<div class="a dotv" style="left:38px;top:363px;height:6px"></div>
<div class="a dotv" style="left:38px;top:379px;height:6px"></div>
<div class="a dotv" style="left:38px;top:395px;height:6px"></div>
<div class="a dotv" style="left:38px;top:411px;height:6px"></div>
<div class="a dotv" style="left:38px;top:427px;height:6px"></div>
<div class="a dotv" style="left:38px;top:443px;height:6px"></div>
<div class="a dotv" style="left:38px;top:459px;height:6px"></div>
<div class="a dotv" style="left:38px;top:475px;height:6px"></div>
<div class="a dotv" style="left:38px;top:491px;height:6px"></div>
<div class="a dotv" style="left:38px;top:507px;height:6px"></div>
<div class="a dotv" style="left:38px;top:523px;height:6px"></div>
<div class="a dotv" style="left:38px;top:539px;height:6px"></div>
<div class="a dotv" style="left:38px;top:555px;height:6px"></div>
<div class="a dotv" style="left:38px;top:571px;height:6px"></div>
<div class="a dotv" style="left:38px;top:587px;height:6px"></div>
<div class="a dotv" style="left:38px;top:603px;height:6px"></div>
<div class="a dotv" style="left:38px;top:619px;height:6px"></div>
<div class="a dotv" style="left:38px;top:635px;height:6px"></div>
<div class="a dotv" style="left:38px;top:651px;height:6px"></div>
<div class="a dotv" style="left:38px;top:667px;height:6px"></div>
<div class="a dotv" style="left:38px;top:683px;height:6px"></div>
<div class="a dotv" style="left:38px;top:699px;height:6px"></div>
<div class="a dotv" style="left:38px;top:715px;height:6px"></div>
<div class="a dotv" style="left:38px;top:731px;height:6px"></div>
<div class="a dotv" style="left:38px;top:747px;height:6px"></div>
<div class="a dotv" style="left:38px;top:763px;height:6px"></div>
<div class="a dotv" style="left:38px;top:779px;height:38px"></div>
<div class="a dotv" style="left:38px;top:827px;height:6px"></div>
<div class="a dotv" style="left:38px;top:136px;height:9px"></div></div></div>
<div id="splitter" class="a"></div>
<!-- toolbar -->
<div class="a" style="left:261px;top:133px;width:1259px;height:28px;background:#eff0f1;border-left:1px solid #b4b8bc"></div>
<div class="a" style="left:488px;top:133px;width:1032px;height:1px;background:#a4aab2"></div>
<svg class="a" style="left:262px;top:134px" width="640" height="27" viewBox="262 134 640 27">
 <defs>
  <linearGradient id="bl" x1="0" y1="0" x2="0" y2="1"><stop offset="0" stop-color="#e8f4fc"/><stop offset="1" stop-color="#b4d8f4"/></linearGradient>
  <linearGradient id="gd" x1="0" y1="0" x2="0" y2="1"><stop offset="0" stop-color="#f8ec98"/><stop offset="1" stop-color="#dcbc38"/></linearGradient>
  <linearGradient id="cb" x1="0" y1="0" x2="0" y2="1"><stop offset="0" stop-color="#e4f4fe"/><stop offset="1" stop-color="#98d0f6"/></linearGradient>
 </defs>
 <!-- icon1 folder+doc -->
 <path d="M269.5 141 L272 139.5 H279.5 V154.5 H269.5 Z" fill="#ecc878" stroke="#c8a050" stroke-width="1"/>
 <rect x="269.5" y="141" width="3" height="13.5" fill="#d8b060"/>
 <path d="M274.5 144.5 H281 L282.5 146 V154.5 H274.5 Z" fill="#fff" stroke="#505860" stroke-width="1"/>
 <path d="M276 147.5 H281 M276 149.5 H281 M276 151.5 H280" stroke="#9aa8b4" stroke-width="1"/>
 <!-- icon2 -->
 <path d="M298.5 146.5 H307.5 V155.5 H298.5 Z" fill="#fff" stroke="#b8bcc0" stroke-width="1"/>
 <path d="M294 140.5 H301.5 V149.5 H292.5 V142 Z" fill="url(#bl)" stroke="#607890" stroke-width="1.2"/>
 <path d="M303.5 141.5 H306 V145 M304.5 144.5 L306 146 L307.5 144.5" stroke="#000" stroke-width="1.3" fill="none"/>
 <!-- icon3 -->
 <path d="M316.5 146.5 H325.5 V155.5 H316.5 Z" fill="#fff" stroke="#b8bcc0" stroke-width="1"/>
 <path d="M322.5 140.5 H330 L331.5 142 V149.5 H322.5 Z" fill="url(#bl)" stroke="#607890" stroke-width="1.2"/>
 <path d="M320.5 141.5 H318 V145 M316.5 144.5 L318 146 L319.5 144.5" stroke="#000" stroke-width="1.3" fill="none"/>
 <path d="M336.5 137 V159" stroke="#a0a4a8" stroke-width="1"/>
 <!-- prev/next -->
 <path d="M464 148 L475 140 V156 Z" fill="#a0a0a0"/>
 <path d="M491.5 140.5 L502 148 L491.5 155.5 Z" fill="url(#gd)" stroke="#8c7434" stroke-width="1"/>
 <!-- fit width -->
 <rect x="513.5" y="140.5" width="11" height="15" fill="url(#bl)" stroke="#3c5878" stroke-width="1.2"/>
 <path d="M515 148 L518 145 V151 Z M523 148 L520 145 V151 Z" fill="#20508c"/>
 <!-- fit page -->
 <rect x="536.5" y="140.5" width="13.5" height="15" fill="url(#bl)" stroke="#3c5878" stroke-width="1.2"/>
 <path d="M543.2 142.5 L545 144.5 H541.4 Z M543.2 153.5 L545 151.5 H541.4 Z M538.5 148 L540.5 146.2 V149.8 Z M548 148 L546 146.2 V149.8 Z" fill="#30507a"/>
 <!-- zoom out/in -->
 <circle cx="567" cy="148" r="7.5" fill="url(#cb)" stroke="#5c6c7c" stroke-width="1.2"/>
 <rect x="563" y="147" width="8" height="2.2" fill="#144a84"/>
 <circle cx="591" cy="148" r="7.5" fill="url(#cb)" stroke="#5c6c7c" stroke-width="1.2"/>
 <rect x="587" y="147" width="8" height="2.2" fill="#144a84"/>
 <rect x="589.9" y="144" width="2.2" height="8" fill="#144a84"/>
 <path d="M603.5 137 V159" stroke="#a0a4a8" stroke-width="1"/>
</svg>
<div class="a" style="left:346px;top:141px;font-size:13px;line-height:16px;color:#1a1a1a;letter-spacing:-0.3px">Page:</div>
<div class="a" style="left:384px;top:138px;width:41px;height:19px;background:#fff;border-top:1px solid #f0f0f0;border-left:1px solid #e4e4e4"></div>
<div class="a" style="left:412px;top:141px;font-size:13px;line-height:16px;color:#1a1a1a">1</div>
<div class="a" style="left:428px;top:141px;font-size:13px;line-height:16px;color:#1a1a1a">/ 17</div>
<div class="a" style="left:613px;top:140px;font-size:13px;line-height:16px;color:#1a1a1a;letter-spacing:-0.6px">Find:</div>
<div class="a" style="left:646px;top:138px;width:160px;height:19px;background:#fff;border-top:1px solid #8c8c8c;border-left:1px solid #8c8c8c;border-bottom:1px solid #f4f4f4;border-right:1px solid #f4f4f4"></div>
<svg class="a" style="left:808px;top:136px" width="72" height="24" viewBox="808 136 72 24">
 <path d="M812 142 H820 L827 140 V156 L820 152 V155 H812 Z" fill="#a0a0a0"/>
 <circle cx="816.5" cy="144.5" r="0.9" fill="#f0f0f0"/>
 <path d="M852 142 H844 L837 140 V156 L844 152 V155 H852 Z" fill="#a0a0a0"/>
 <circle cx="847.5" cy="144.5" r="0.9" fill="#f0f0f0"/>
 <path d="M861.5 155 L866 144.5 L870.5 155 M863.5 151 H868.5" stroke="#8a7ad8" stroke-width="1" fill="none"/>
 <text x="867" y="147.5" font-family="Liberation Sans" font-size="10.5" fill="#d02478">a</text>
</svg>
<div class="a" style="left:261px;top:161px;width:1245px;height:2px;background:#8c8c8c"></div>

<div id="doc" class="a">
  
</div>
<svg class="a" style="left:408px;top:163px" width="950" height="671" viewBox="408 163 950 671" shape-rendering="crispEdges">
 <rect x="408" y="163" width="950" height="671" fill="#fff"/>
 <g stroke="#8c8c8c" stroke-width="1" fill="none">
  <rect x="435.5" y="188.5" width="893" height="629"/>
  <path d="M583.5 174 V188 M731.5 174 V188 M880.5 174 V188 M1028.5 174 V188 M1176.5 174 V188"/>
  <path d="M421 343.5 H435 M421 501.5 H435 M421 659.5 H435 M1329 343.5 H1342 M1329 501.5 H1342 M1329 659.5 H1342"/>
  <!-- revision table -->
  <rect x="1229.5" y="188.5" width="99" height="35"/>
  <path d="M1229.5 194.5 H1328.5 M1229.5 200.5 H1328.5 M1229.5 206.5 H1328.5 M1229.5 211.5 H1328.5 M1229.5 217.5 H1328.5"/>
  <path d="M1245.5 194.5 V223.5 M1288.5 194.5 V223.5 M1314.5 194.5 V223.5"/>
  <!-- title block -->
  <path d="M1184.5 746.5 H1328.5 M1184.5 746.5 V817.5 M1184.5 760.5 H1328.5 M1112.5 774.5 H1328.5 M1112.5 774.5 V817.5 M1155.5 774.5 V817.5 M1112.5 803.5 H1184.5 M1184.5 810.5 H1328.5 M1276.5 810.5 V817.5"/>
  <path d="M1112.5 789.5 H1328.5" stroke="#b0b0b0" stroke-width="1.5"/>
 </g>
 <g font-family="Liberation Serif" font-size="7.5" fill="#333" text-anchor="middle">
  <text x="510" y="186">6</text><text x="659.5" y="186">5</text><text x="806" y="186">4</text>
  <text x="955" y="186">3</text><text x="1103" y="186">2</text><text x="1254" y="186">1</text>
  <text x="430" y="265">D</text><text x="430" y="422">C</text><text x="430" y="580">B</text><text x="430" y="738">A</text>
  <text x="1333.5" y="265">D</text><text x="1333.5" y="422">C</text><text x="1333.5" y="580">B</text><text x="1333.5" y="738">A</text>
 </g>
 <g font-family="Liberation Sans" font-size="3" fill="#666" shape-rendering="auto">
  <text x="1266" y="193">REVISION RECORD</text>
  <text x="1235" y="199">VER</text><text x="1260" y="199">DESCRIPTION</text><text x="1294" y="199">APPROVED</text><text x="1316" y="199">DATE</text>
  <text x="1187" y="750">TITLE NAME</text>
  <text x="1187" y="765">DOCUMENT NO.</text>
  <text x="1187" y="779">DEPARTMENT</text>
  <text x="1187" y="794">COMPANY</text>
  <text x="1115" y="780">DESIGNER</text><text x="1115" y="795">ENG</text><text x="1115" y="809">APPROVED</text>
  <text x="1159" y="780">DATE</text><text x="1159" y="795">DATE</text><text x="1159" y="809">DATE</text>
  <text x="1158" y="786" font-size="3.5">2012/08/11</text><text x="1158" y="799" font-size="3.5">2012/08/11</text><text x="1158" y="814" font-size="3.5">2012/08/11</text>
  <text x="1196" y="815">CONFIDENTIAL AND PROPRIETARY</text><text x="1278" y="815">SHEET 1 OF 16</text>
 </g>
 <g font-family="Liberation Sans" fill="#222" shape-rendering="auto">
  <text x="1196" y="757.5" font-size="5.2" textLength="100" lengthAdjust="spacingAndGlyphs">SC6531_PLATFORM_REFERENCE_SCH_V1.0.0</text>
  <text x="1196" y="786.5" font-size="5.5">Hardware RD.</text>
  <text x="1196" y="804" font-family="Liberation Serif" font-size="5.5" textLength="70" lengthAdjust="spacingAndGlyphs">Spreadtrum communications, Inc.</text>
 </g>
</svg>

<!-- title bar buttons -->
<div class="a" style="left:1421px;top:1px;width:29px;height:21px;border:1px solid #0c3444;border-top:none;background:#64c9ec"></div>
<div class="a" style="left:1450px;top:1px;width:26px;height:21px;border:1px solid #0c3444;border-top:none;border-left:none;background:#64c9ec"></div>
<div class="a" style="left:1476px;top:1px;width:45px;height:21px;background:#d9564a;border-bottom:1px solid #5a2a24"></div>
<div class="a" style="left:1430px;top:12px;width:10px;height:3px;background:#000"></div>
<div class="a" style="left:1458px;top:7px;width:10px;height:8px;border:2px solid #000;border-top-width:2px"></div>
<svg class="a" style="left:1493px;top:6px" width="11" height="10"><path d="M1.5 1.5 L9.5 8.5 M9.5 1.5 L1.5 8.5" stroke="#000" stroke-width="2.1"/></svg>
<!-- app icon -->
<div class="a" style="left:2px;top:7px;width:16px;height:16px;background:#c80a0a;border-radius:2px"></div>
<svg class="a" style="left:2px;top:7px" width="16" height="16"><g stroke="#fff" stroke-width="1.1" fill="none">
<path d="M2.5 3.5 H7 M4.5 2.5 L3.5 6 H7 M5 6 V8 M3 5 L2.5 7.5"/>
<path d="M9 2.5 H14 M9.5 4 H13.5 M9.5 5.5 V7.5 H14 M11.5 3 V6"/>
<path d="M2.5 10 H7 M4.5 9 V14.5 M2.5 12.5 L6.5 11.5"/>
<path d="M9 10.5 H14 M11.5 9 V14.5 M9.5 12.5 H13.5 L10 14.5"/>
</g></svg>
<!-- tree scrollbar -->
<div class="a" style="left:236px;top:141px;width:17px;height:691px;background:#fff;border:1px solid #a8a8a8"></div>
<div class="a" style="left:236px;top:157px;width:17px;height:1px;background:#a8a8a8"></div>
<div class="a" style="left:236px;top:815px;width:17px;height:1px;background:#a8a8a8"></div>
<svg class="a" style="left:236px;top:142px" width="17" height="16"><path d="M4.5 10.5 L8.5 6.5 L12.5 10.5" stroke="#404040" stroke-width="1.3" fill="none"/></svg>
<svg class="a" style="left:236px;top:816px" width="17" height="16"><path d="M4.5 6 L8.5 10 L12.5 6" stroke="#404040" stroke-width="1.3" fill="none"/></svg>
<div class="a" style="left:236px;top:529px;width:17px;height:105px;background:#dcdcdc;border:1px solid #8a8a8a"></div>
<div class="a" style="left:241px;top:577px;width:7px;height:2px;background:#505050"></div>
<div class="a" style="left:241px;top:580px;width:7px;height:2px;background:#505050"></div>
<div class="a" style="left:241px;top:583px;width:7px;height:2px;background:#505050"></div>
<!-- splitter arrow -->
<svg class="a" style="left:253px;top:488px" width="8" height="12"><path d="M2 1.5 L6 6 L2 10.5 Z" fill="#d02020"/></svg>
<!-- right scrollbar -->
<div class="a" style="left:1506px;top:161px;width:14px;height:673px;background:#fff"></div>
<svg class="a" style="left:1505.5px;top:163px" width="15" height="16"><path d="M3 10 L7.5 5.5 L12 10" stroke="#404040" stroke-width="1.3" fill="none"/></svg>
<div class="a" style="left:1506px;top:178px;width:14px;height:37px;background:#dcdcdc;border-top:1px solid #c8c8c8;border-bottom:1px solid #c8c8c8"></div>
<div class="a" style="left:1509px;top:193px;width:7px;height:2px;background:#505050"></div>
<div class="a" style="left:1509px;top:196px;width:7px;height:2px;background:#505050"></div>
<div class="a" style="left:1509px;top:199px;width:7px;height:2px;background:#505050"></div>
<div class="a" style="left:1506px;top:820px;width:14px;height:1px;background:#c8c8c8"></div><svg class="a" style="left:1505.5px;top:819px" width="15" height="16"><path d="M3 6 L7.5 10.5 L12 6" stroke="#404040" stroke-width="1.3" fill="none"/></svg>
<div class="a" style="left:1520px;top:111px;width:1px;height:725px;background:#63c8ea"></div>
<div class="a" style="left:0;top:834px;width:1521px;height:2px;background:#eaf2f8"></div>

<div id="status" class="a"></div>
<div id="bottom" class="a"></div>
<div class="a mono" style="left:0;top:843px;color:#0a1a3a">Version:1.0.0.52</div>
<div class="a mono" style="left:1339px;top:843px;color:#fff">Current [YA855P_V3.0_Main_sch]</div>
</body></html>
